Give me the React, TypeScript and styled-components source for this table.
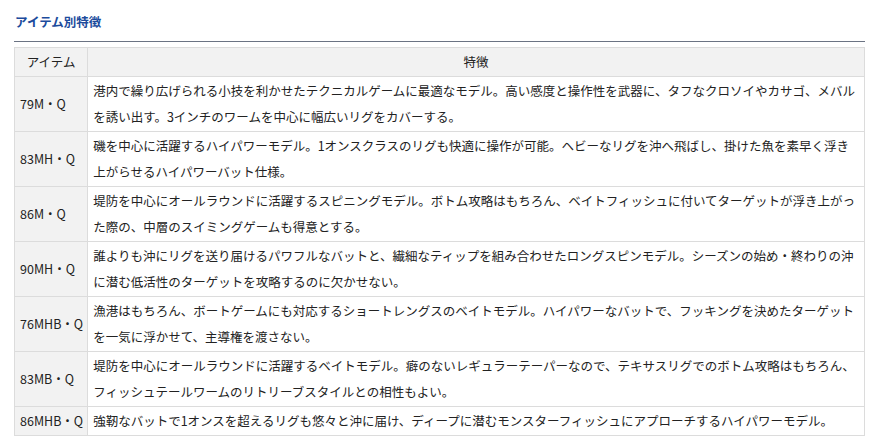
import React from 'react';
import styled, { createGlobalStyle } from 'styled-components';

const GlobalStyle = createGlobalStyle`
    html, body {
        margin: 0;
        padding: 0;
        background: #fff;
    }
    body {
        font-family: "Noto Sans CJK JP", "Noto Sans", sans-serif;
        color: #222;
    }
`;

const Section = styled.section`
    width: 851px;
    padding: 13px 0 0 14px;
`;

const Title = styled.h3`
    margin: 0;
    padding: 0 0 10px 1px;
    font-size: 12.5px;
    line-height: 18px;
    font-weight: 700;
    color: #1c4b9c;
    border-bottom: 1px solid #6b7383;
`;

const Table = styled.table`
    margin-top: 5px;
    width: 100%;
    border-collapse: collapse;
    font-size: 12.5px;
    line-height: 26px;
`;

const HeadCell = styled.th`
    padding: 1px 5px;
    background: #f2f2f2;
    border: 1px solid #dcdcdc;
    font-weight: 400;
    text-align: center;
`;

const NameCell = styled.td`
    width: 63px;
    padding: 1px 4px 1px 5px;
    background: #f2f2f2;
    border: 1px solid #dcdcdc;
    white-space: nowrap;
`;

const TextCell = styled.td`
    padding: 1px 5px;
    border: 1px solid #dcdcdc;
`;

const items: [string, string][] = [
    ['79M・Q', '港内で繰り広げられる小技を利かせたテクニカルゲームに最適なモデル。高い感度と操作性を武器に、タフなクロソイやカサゴ、メバルを誘い出す。3インチのワームを中心に幅広いリグをカバーする。'],
    ['83MH・Q', '磯を中心に活躍するハイパワーモデル。1オンスクラスのリグも快適に操作が可能。ヘビーなリグを沖へ飛ばし、掛けた魚を素早く浮き上がらせるハイパワーバット仕様。'],
    ['86M・Q', '堤防を中心にオールラウンドに活躍するスピニングモデル。ボトム攻略はもちろん、ベイトフィッシュに付いてターゲットが浮き上がった際の、中層のスイミングゲームも得意とする。'],
    ['90MH・Q', '誰よりも沖にリグを送り届けるパワフルなバットと、繊細なティップを組み合わせたロングスピンモデル。シーズンの始め・終わりの沖に潜む低活性のターゲットを攻略するのに欠かせない。'],
    ['76MHB・Q', '漁港はもちろん、ボートゲームにも対応するショートレングスのベイトモデル。ハイパワーなバットで、フッキングを決めたターゲットを一気に浮かせて、主導権を渡さない。'],
    ['83MB・Q', '堤防を中心にオールラウンドに活躍するベイトモデル。癖のないレギュラーテーパーなので、テキサスリグでのボトム攻略はもちろん、フィッシュテールワームのリトリーブスタイルとの相性もよい。'],
    ['86MHB・Q', '強靭なバットで1オンスを超えるリグも悠々と沖に届け、ディープに潜むモンスターフィッシュにアプローチするハイパワーモデル。'],
];

export default function App() {
    return (
        <>
            <GlobalStyle />
            <Section>
                <Title>アイテム別特徴</Title>
                <Table>
                    <thead>
                        <tr>
                            <HeadCell>アイテム</HeadCell>
                            <HeadCell>特徴</HeadCell>
                        </tr>
                    </thead>
                    <tbody>
                        {items.map(([name, text]) => (
                            <tr key={name}>
                                <NameCell>{name}</NameCell>
                                <TextCell>{text}</TextCell>
                            </tr>
                        ))}
                    </tbody>
                </Table>
            </Section>
        </>
    );
}
